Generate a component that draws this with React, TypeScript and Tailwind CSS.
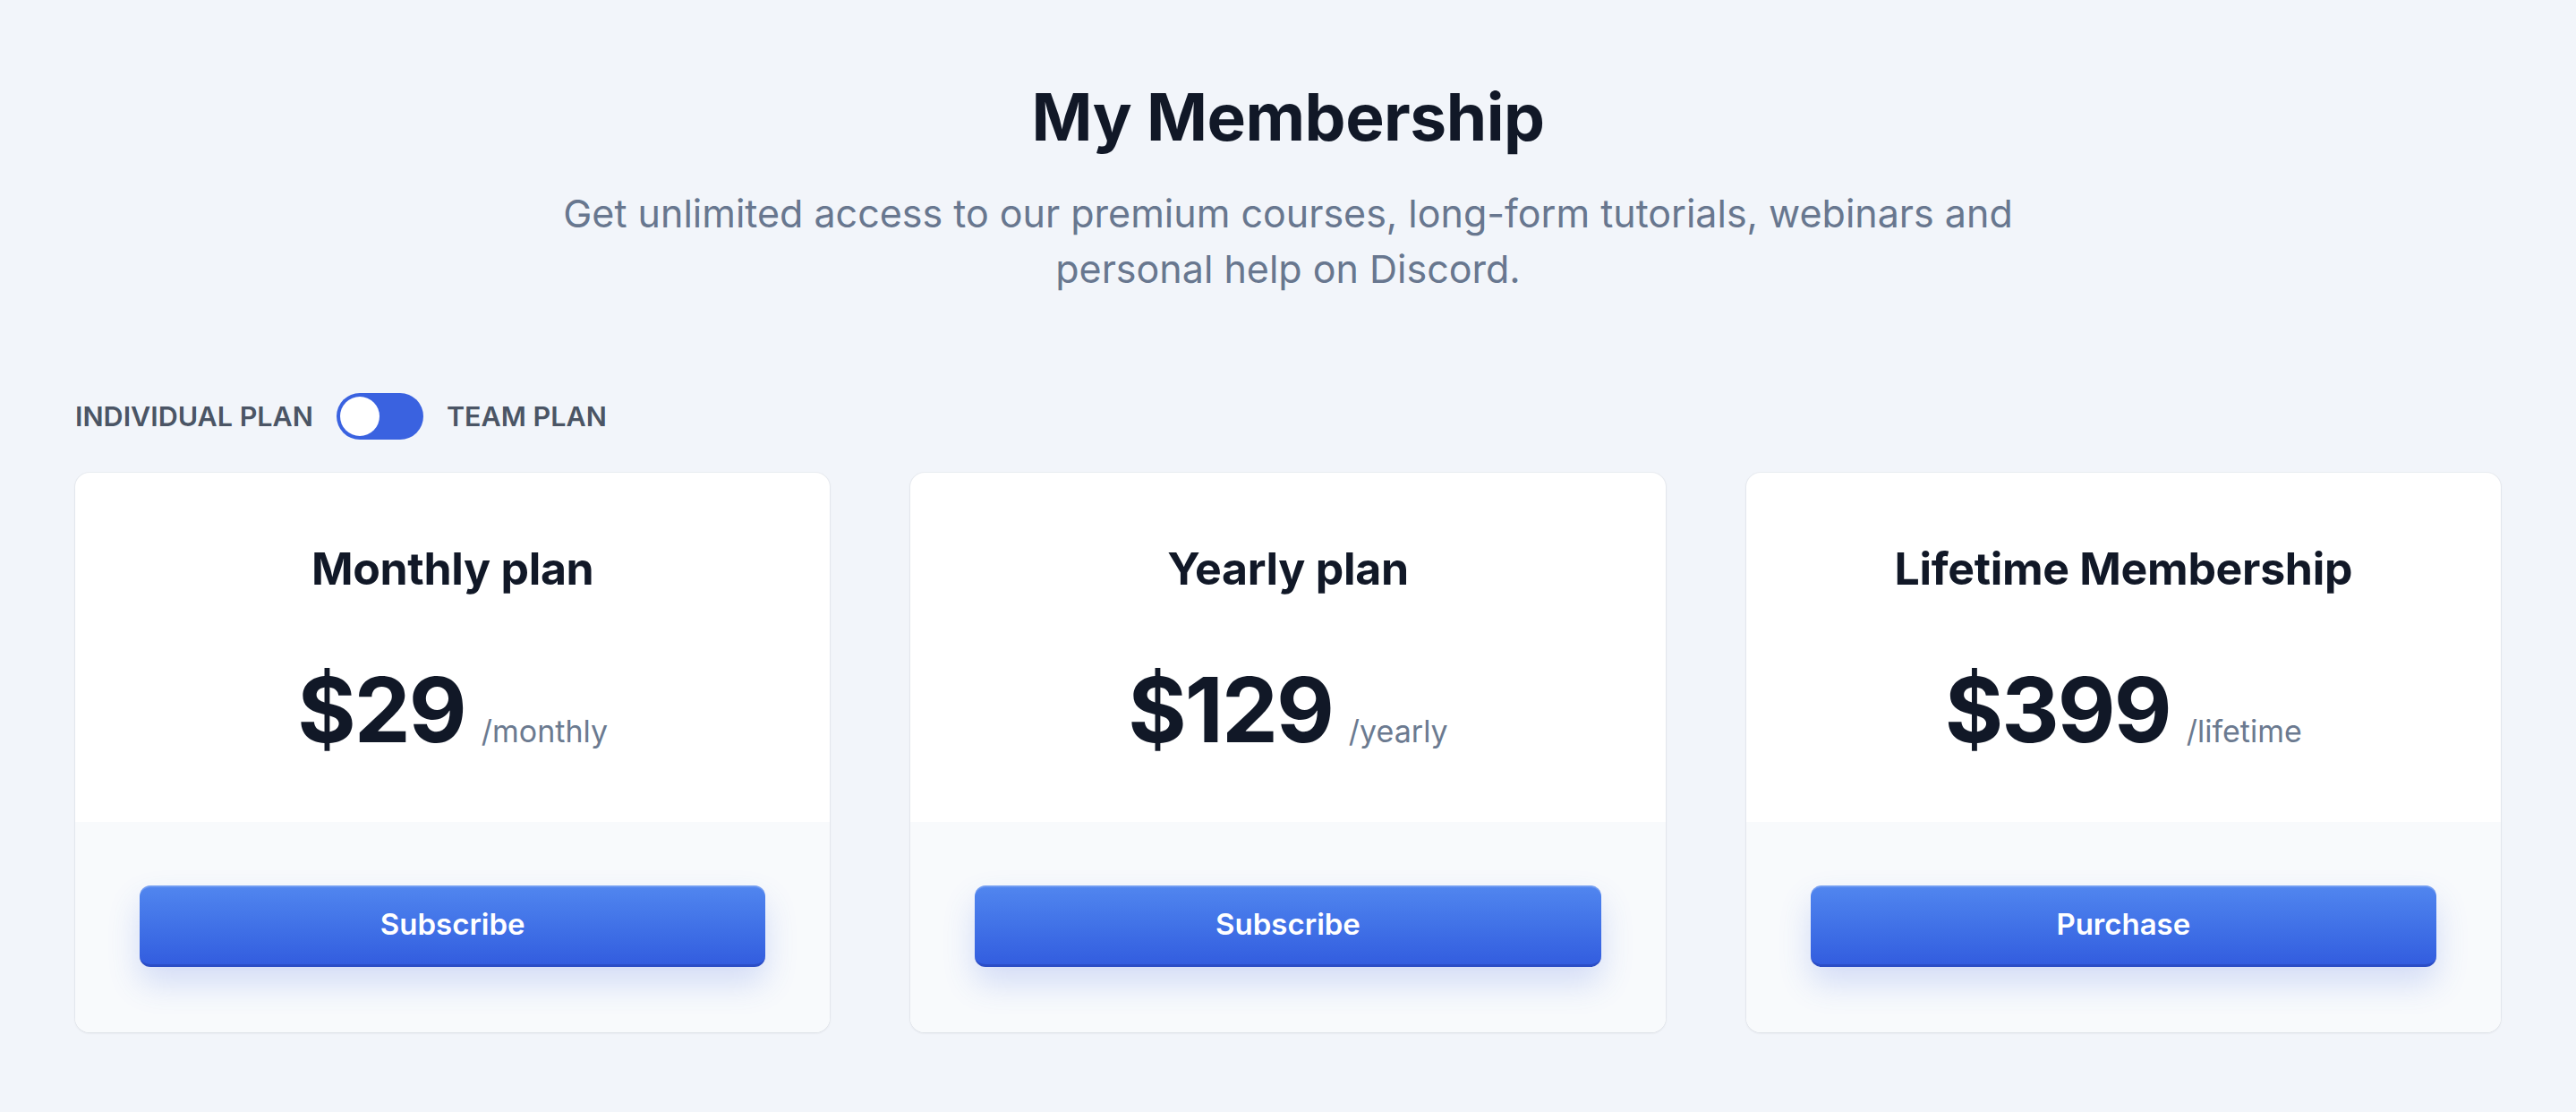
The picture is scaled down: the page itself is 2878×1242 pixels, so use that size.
const plans = [
  { name: "Monthly plan", price: "$29", period: "/monthly", cta: "Subscribe" },
  { name: "Yearly plan", price: "$129", period: "/yearly", cta: "Subscribe" },
  { name: "Lifetime Membership", price: "$399", period: "/lifetime", cta: "Purchase" },
];

function Toggle() {
  return (
    <button
      type="button"
      className="relative flex h-[52px] w-[97px] items-center rounded-full bg-[#3a62e0] p-[4px]"
    >
      <span className="block h-[44px] w-[44px] rounded-full bg-white" />
    </button>
  );
}

function PlanCard({ name, price, period, cta }: (typeof plans)[number]) {
  return (
    <div className="overflow-hidden rounded-[16px] bg-white shadow-[0_1px_3px_rgba(15,23,42,0.08),0_0_0_1px_rgba(15,23,42,0.03)]">
      <div className="flex h-[390px] flex-col items-center pt-[77px]">
        <h2 className="text-[50px] font-bold leading-[60px] tracking-[-0.3px] text-[#111827]">{name}</h2>
        <div className="mt-[76px] flex items-baseline">
          <span className="text-[100px] font-bold leading-[104px] tracking-[-2px] text-[#111827]">
            {price}
          </span>
          <span className="ml-[18px] text-[34px] leading-none text-[#6b7a90]">{period}</span>
        </div>
      </div>
      <div className="bg-[#f8fafc] px-[72px] pb-[73px] pt-[71px]">
        <button
          type="button"
          className="flex h-[91px] w-full items-center justify-center rounded-[12px] border-b-[3px] border-[#2b4dc6] bg-gradient-to-b from-[#5186ef] to-[#335ddf] text-[33px] font-semibold text-white shadow-[inset_0_2px_0_rgba(255,255,255,0.18),0_18px_36px_rgba(59,99,227,0.2)]"
        >
          {cta}
        </button>
      </div>
    </div>
  );
}

export default function App() {
  return (
    <div
      className="min-h-screen bg-[#f2f5fa] px-[84px] pb-[90px] pt-[85px]"
      style={{ fontFamily: "Inter, 'Noto Sans', sans-serif" }}
    >
      <header className="flex flex-col items-center text-center">
        <h1 className="text-[73px] font-bold leading-[92px] tracking-[-0.5px] text-[#111827]">
          My Membership
        </h1>
        <p className="mt-[30px] max-w-[1760px] text-[43px] leading-[62px] text-[#68778f]">
          Get unlimited access to our premium courses, long-form tutorials, webinars and
          <br />
          personal help on Discord.
        </p>
      </header>

      <div className="mt-[108px] flex items-center gap-[26px]">
        <span className="text-[30.5px] font-semibold text-[#4b5565]">INDIVIDUAL PLAN</span>
        <Toggle />
        <span className="text-[30.5px] font-semibold text-[#4b5565]">TEAM PLAN</span>
      </div>

      <div className="mt-[37px] grid grid-cols-3 gap-[90px]">
        {plans.map((p) => (
          <PlanCard key={p.name} {...p} />
        ))}
      </div>
    </div>
  );
}
